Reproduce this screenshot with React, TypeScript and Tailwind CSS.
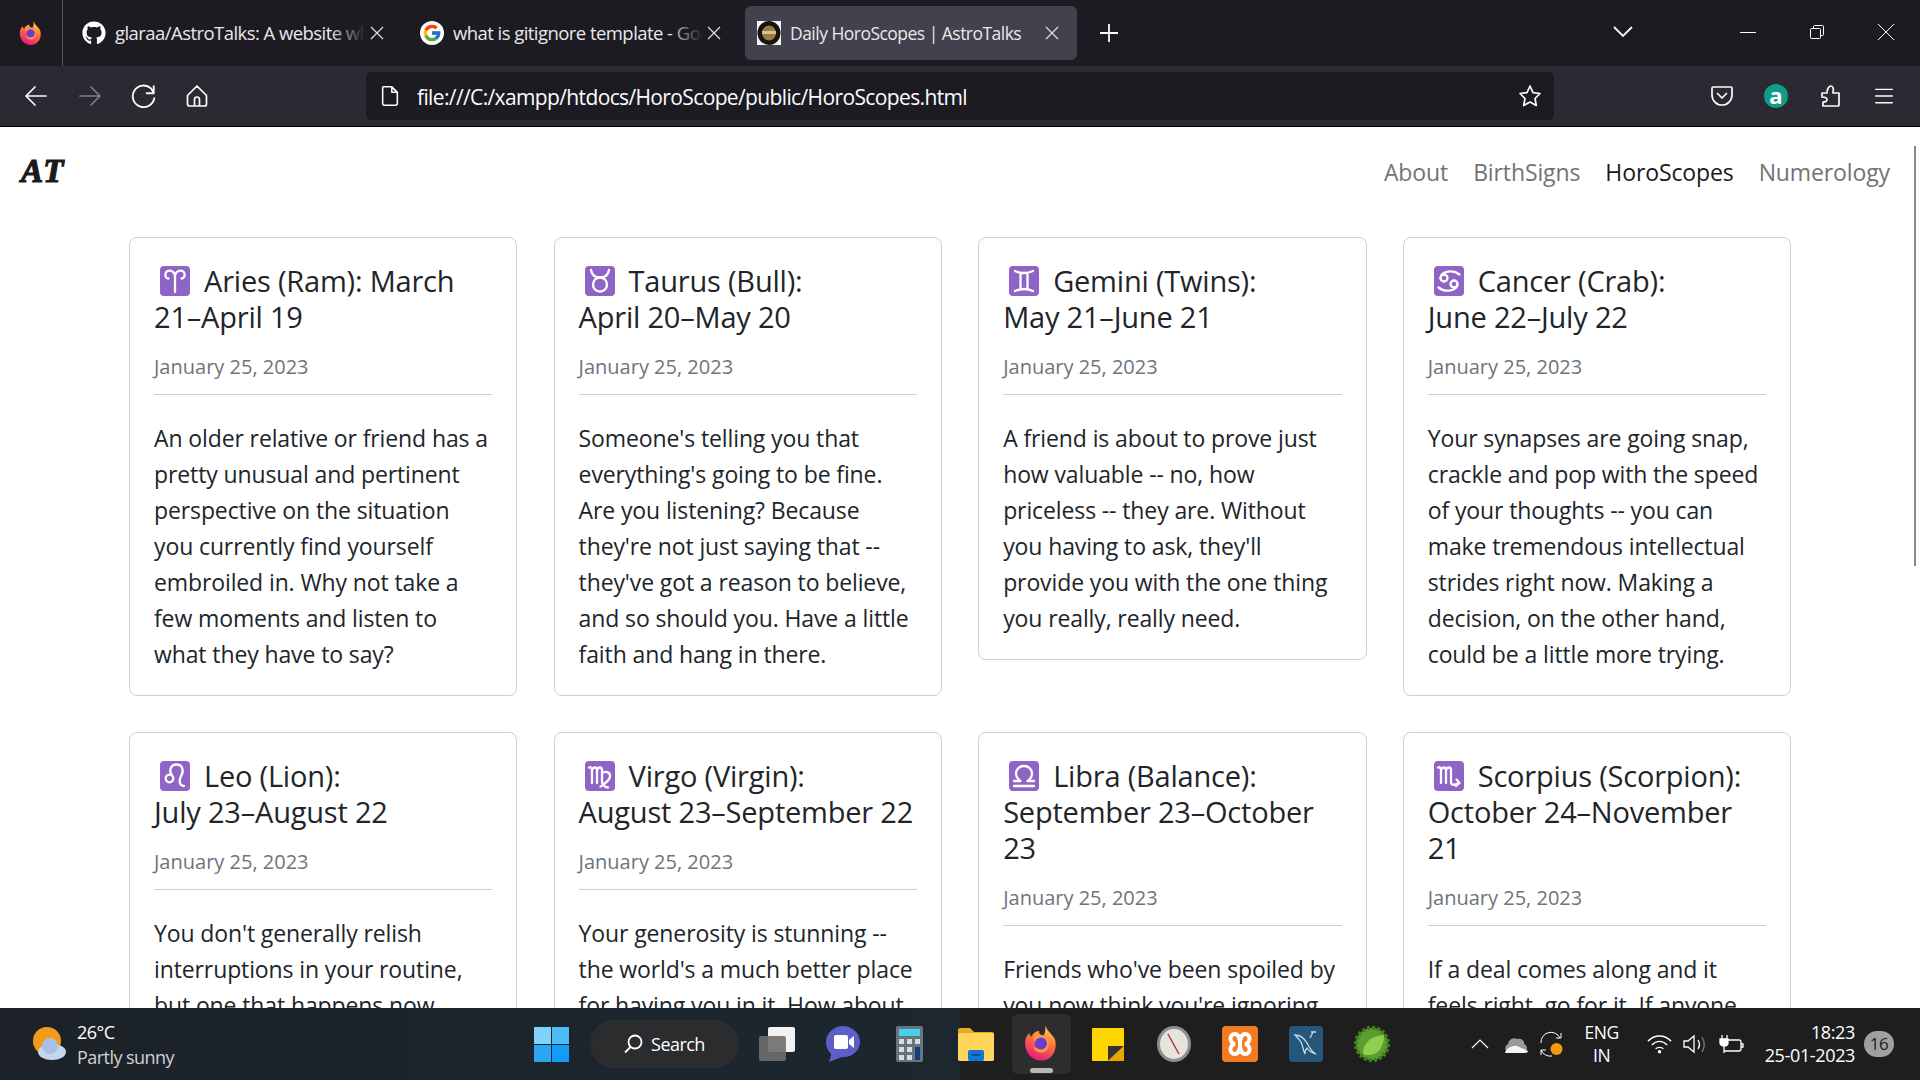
import { FaGithub } from "react-icons/fa";
import { FcGoogle } from "react-icons/fc";
import { ReactNode } from "react";

type Card = { sign: ReactNode; title: string[]; lines: string[] };

const signs: Record<string, ReactNode> = {
  aries: <path d="M15 26V11C15 4 7 2.500 5.500 7.500C4.800 10.500 6.500 12.500 8.500 12.500M15 11C15 4 23 2.500 24.500 7.500C25.200 10.500 23.500 12.500 21.500 12.500" />,
  taurus: (
    <>
      <circle cx="15" cy="18.500" r="7" />
      <path d="M6 4C7 9.500 11 11.500 15 11.500C19 11.500 23 9.500 24 4" />
    </>
  ),
  gemini: <path d="M6 5Q15 9 24 5M6 25Q15 21 24 25M11.500 7.500V22.500M18.500 7.500V22.500" />,
  cancer: (
    <>
      <circle cx="10" cy="12" r="3.500" />
      <circle cx="20" cy="18" r="3.500" />
      <path d="M6.500 12C7 5 19 3 25.500 8.500M23.500 18C23 25 11 27 4.500 21.500" />
    </>
  ),
  leo: (
    <>
      <circle cx="9.500" cy="17.500" r="3.800" />
      <path d="M12 14.500C8.500 9 11 3.500 16.500 3.500C22.500 3.500 24 9.500 21.500 14C19 18.500 18.500 25 24 25" />
    </>
  ),
  virgo: <path d="M4 6.500C6 5.500 7 7.500 7 9.500V22M7 9.500C8 5.500 12 5.500 12 9.500V22M12 9.500C13 5.500 17 5.500 17 9.500V20C17 23.500 19.500 26.500 23 26.500M17 12.500C20 9.500 25.500 11 25 15.500C24.500 20 19 23 15.500 25.500" />,
  libra: <path d="M5 25H25M5 20H11.500C8.500 18 7 15 7 12.500C7 8 10.500 5 15 5C19.500 5 23 8 23 12.500C23 15 21.500 18 18.500 20H25" />,
  scorpio: <path d="M4 6.500C6 5.500 7 7.500 7 9.500V22M7 9.500C8 5.500 12 5.500 12 9.500V22M12 9.500C13 5.500 17 5.500 17 9.500V21C17 24.500 20 24.500 25 22M22.500 18.500L25.500 22L22 25" />,
};

const row1: Card[] = [
  {
    sign: signs.aries,
    title: ["Aries (Ram): March", "21–April 19"],
    lines: [
      "An older relative or friend has a",
      "pretty unusual and pertinent",
      "perspective on the situation",
      "you currently find yourself",
      "embroiled in. Why not take a",
      "few moments and listen to",
      "what they have to say?",
    ],
  },
  {
    sign: signs.taurus,
    title: ["Taurus (Bull):", "April 20–May 20"],
    lines: [
      "Someone's telling you that",
      "everything's going to be fine.",
      "Are you listening? Because",
      "they're not just saying that --",
      "they've got a reason to believe,",
      "and so should you. Have a little",
      "faith and hang in there.",
    ],
  },
  {
    sign: signs.gemini,
    title: ["Gemini (Twins):", "May 21–June 21"],
    lines: [
      "A friend is about to prove just",
      "how valuable -- no, how",
      "priceless -- they are. Without",
      "you having to ask, they'll",
      "provide you with the one thing",
      "you really, really need.",
    ],
  },
  {
    sign: signs.cancer,
    title: ["Cancer (Crab):", "June 22–July 22"],
    lines: [
      "Your synapses are going snap,",
      "crackle and pop with the speed",
      "of your thoughts -- you can",
      "make tremendous intellectual",
      "strides right now. Making a",
      "decision, on the other hand,",
      "could be a little more trying.",
    ],
  },
];

const row2: Card[] = [
  {
    sign: signs.leo,
    title: ["Leo (Lion):", "July 23–August 22"],
    lines: ["You don't generally relish", "interruptions in your routine,", "but one that happens now"],
  },
  {
    sign: signs.virgo,
    title: ["Virgo (Virgin):", "August 23–September 22"],
    lines: ["Your generosity is stunning --", "the world's a much better place", "for having you in it. How about"],
  },
  {
    sign: signs.libra,
    title: ["Libra (Balance):", "September 23–October", "23"],
    lines: ["Friends who've been spoiled by", "you now think you're ignoring"],
  },
  {
    sign: signs.scorpio,
    title: ["Scorpius (Scorpion):", "October 24–November", "21"],
    lines: ["If a deal comes along and it", "feels right, go for it. If anyone"],
  },
];

function SignCard({ card }: { card: Card }) {
  return (
    <div className="rounded-lg border border-[#d0d0d0] bg-white px-[24px] pt-[25px] pb-[23px]">
      <h5 className="text-[29px] leading-[36px] tracking-[-0.007em] text-[#212529] whitespace-nowrap">
        {card.title.map((line, i) => (
          <div key={i} className="flex items-center">
            {i === 0 && (
              <svg viewBox="0 0 30 30" className="w-[30px] h-[30px] ml-[6px] mr-[14px] shrink-0" fill="none" stroke="white" strokeWidth="2.300" strokeLinecap="round" strokeLinejoin="round">
                <rect width="30" height="30" rx="4" fill="#9063c6" stroke="none" />
                {card.sign}
              </svg>
            )}
            {line}
          </div>
        ))}
      </h5>
      <p className="mt-[17px] text-[20px] leading-[30px] text-[#6c757d]">January 25, 2023</p>
      <hr className="mt-[12px] border-[#cfcfcf]" />
      <div className="mt-[25px] text-[23px] leading-[36px] tracking-[-0.005em] text-[#212529] whitespace-nowrap">
        {card.lines.map((line, i) => (
          <div key={i}>{line}</div>
        ))}
      </div>
    </div>
  );
}

function Tab({ icon, label, width, active }: { icon: ReactNode; label: string; width: string; active?: boolean }) {
  return (
    <div className={`flex items-center h-[54px] rounded-md pl-[12px] ${width} ${active ? "bg-[#42414d]" : ""}`}>
      <div className="w-[24px] h-[24px] shrink-0">{icon}</div>
      <div className={`relative ml-[9px] flex-1 overflow-hidden whitespace-nowrap tracking-[-0.03em] text-[#e8e8ea] ${active ? "text-[17.5px]" : "text-[18.5px]"}`}>
        {label}
        {!active && <div className="absolute right-0 top-0 h-full w-[36px] bg-gradient-to-r from-transparent to-[#1c1b22]" />}
      </div>
      <svg viewBox="0 0 16 16" className={`w-[16px] h-[16px] shrink-0 ${active ? "mx-[17px]" : "ml-[3px] mr-[23px]"}`} stroke="#e0e0e6" strokeWidth="1.2">
        <path d="M2 2L14 14M14 2L2 14" />
      </svg>
    </div>
  );
}

function FirefoxIcon({ className }: { className: string }) {
  return (
    <svg viewBox="0 0 32 32" className={className}>
      <defs>
        <linearGradient id="ffx" x1="0.7" y1="0" x2="0.3" y2="1">
          <stop offset="0" stopColor="#ffd24f" />
          <stop offset="0.45" stopColor="#ff7139" />
          <stop offset="1" stopColor="#e31587" />
        </linearGradient>
      </defs>
      <path d="M20 0C20 4 25 7 28 12C31 20 27 32 16 32C7 32 1 25 1 16C1 12 3 8 5 7C5 9 6 10 7 10C8 7 11 5 14 5C13 7 15 9 18 9C20 6 19 3 20 0Z" fill="url(#ffx)" />
      <path d="M8 12C10 8.500 15 8 19 10C24 13 24 21 19 24C15 26 10 24 9 20C13 22 16 21 17 18C15 17 12 17 11 15C10 14 9 13 8 12Z" fill="#ff9a3c" />
      <circle cx="15.500" cy="16.500" r="5.500" fill="#6b3bd1" />
    </svg>
  );
}

function ChromeIcon({ children, className }: { children: ReactNode; className?: string }) {
  return (
    <svg viewBox="0 0 24 24" className={className ?? "w-[24px] h-[24px]"} fill="none" stroke="#fbfbfe" strokeWidth="1.7" strokeLinecap="round" strokeLinejoin="round">
      {children}
    </svg>
  );
}

export default function App() {
  return (
    <div className="flex flex-col h-screen overflow-hidden bg-white font-['Open_Sans',sans-serif]">
      {/* tab strip */}
      <div className="flex items-center h-[66px] shrink-0 bg-[#1c1b22]">
        <div className="flex items-center justify-center w-[63px] h-full border-r border-[#55545c]">
          <FirefoxIcon className="w-[24px] h-[26px]" />
        </div>
        <div className="flex items-center ml-[7px]">
          <Tab
            width="w-[338px]"
            label="glaraa/AstroTalks: A website whe"
            icon={<FaGithub className="w-[24px] h-[24px] text-white" />}
          />
          <Tab
            width="w-[337px]"
            label="what is gitignore template - Goo"
            icon={
              <div className="flex items-center justify-center w-[24px] h-[24px] rounded-full bg-white">
                <FcGoogle className="w-[20px] h-[20px]" />
              </div>
            }
          />
          <Tab
            active
            width="w-[332px]"
            label="Daily HoroScopes | AstroTalks"
            icon={
              <svg viewBox="0 0 24 24" className="w-[24px] h-[24px]">
                <rect width="24" height="24" fill="#f4f4f4" />
                <ellipse cx="12" cy="12" rx="11.500" ry="12" fill="#15130e" />
                <ellipse cx="12" cy="12" rx="7" ry="7.500" fill="#9c7a3e" />
                <rect x="5" y="10" width="14" height="3" fill="#d7c18c" />
              </svg>
            }
          />
        </div>
        <svg viewBox="0 0 20 20" className="w-[20px] h-[20px] ml-[22px]" stroke="#fbfbfe" strokeWidth="1.8">
          <path d="M10 1V19M1 10H19" />
        </svg>
        <svg viewBox="0 0 20 12" className="w-[20px] h-[12px] ml-[494px] -mt-[2px]" fill="none" stroke="#fbfbfe" strokeWidth="1.8">
          <path d="M1 1L10 10L19 1" />
        </svg>
        <div className="w-[16px] h-px ml-[107px] -mt-[2px] bg-white" />
        <svg viewBox="0 0 14 14" className="w-[14px] h-[14px] ml-[54px] -mt-[2px]" fill="none" stroke="white" strokeWidth="1">
          <rect x="0.500" y="3.500" width="10" height="10" rx="1" />
          <path d="M3.500 3.500V1.500A1 1 0 0 1 4.500.5H12.500A1 1 0 0 1 13.500 1.500V9.500A1 1 0 0 1 12.500 10.500H10.500" />
        </svg>
        <svg viewBox="0 0 16 16" className="w-[16px] h-[16px] ml-[54px] -mt-[2px]" stroke="white" strokeWidth="1">
          <path d="M0 0L16 16M16 0L0 16" />
        </svg>
      </div>

      {/* toolbar */}
      <div className="flex items-center h-[61px] shrink-0 bg-[#2b2a33] border-b border-black">
        <ChromeIcon className="w-[24px] h-[24px] ml-[24px]">
          <path d="M22 12H2M11 3L2 12L11 21" />
        </ChromeIcon>
        <ChromeIcon className="w-[24px] h-[24px] ml-[30px] opacity-40">
          <path d="M2 12H22M13 3L22 12L13 21" />
        </ChromeIcon>
        <ChromeIcon className="w-[26px] h-[26px] ml-[29px]">
          <path d="M21 3V9.500H14.500M21.500 14A10 10 0 1 1 18.500 5L21 9" />
        </ChromeIcon>
        <ChromeIcon className="w-[24px] h-[24px] ml-[28px]">
          <path d="M12 2L2.500 11.500V20A2 2 0 0 0 4.500 22H19.500A2 2 0 0 0 21.500 20V11.500ZM9.500 22V15.500A2.500 2.500 0 0 1 14.500 15.500V22" />
        </ChromeIcon>
        <div className="flex items-center w-[1188px] h-[48px] ml-[157px] -mt-px rounded-md bg-[#1c1b22]">
          <ChromeIcon className="w-[22px] h-[24px] ml-[13px]">
            <path d="M5 2H14L20 8V20A2 2 0 0 1 18 22H6A2 2 0 0 1 4 20V3A1 1 0 0 1 5 2ZM14 2V8H20" />
          </ChromeIcon>
          <span className="ml-[16px] mt-[4px] text-[21px] tracking-[-0.03em] text-[#fbfbfe] whitespace-nowrap">
            file:///C:/xampp/htdocs/HoroScope/public/HoroScopes.html
          </span>
          <ChromeIcon className="w-[24px] h-[24px] ml-auto mr-[12px]">
            <path d="M12 2L15 8.600L22 9.500L17 14.500L18.300 21.500L12 18L5.700 21.500L7 14.500L2 9.500L9 8.600Z" />
          </ChromeIcon>
        </div>
        <ChromeIcon className="w-[24px] h-[24px] ml-[156px]">
          <path d="M3 3H21A1 1 0 0 1 22 4V11A10 10 0 0 1 2 11V4A1 1 0 0 1 3 3ZM7.500 9.500L12 14L16.500 9.500" />
        </ChromeIcon>
        <div className="flex items-center justify-center w-[24px] h-[24px] ml-[30px] rounded-full bg-[#0f9d8a] text-white text-[22px] font-bold leading-none pb-[3px]">a</div>
        <ChromeIcon className="w-[24px] h-[26px] ml-[30px]">
          <path d="M4 9H9C9 5 11 2 13 2C15 2 16 5 15 9H21V21A1 1 0 0 1 20 22H5V18C8 18 9 17 9 15.500C9 14 8 13 4 13Z" />
        </ChromeIcon>
        <ChromeIcon className="w-[20px] h-[20px] ml-[32px]">
          <path d="M2 4H22M2 12H22M2 20H22" />
        </ChromeIcon>
      </div>

      {/* page */}
      <div className="relative flex-1 min-h-0 overflow-hidden">
        <nav className="flex items-center justify-between h-[90px] pl-[21px] pr-[30px]">
          <span className="font-['Liberation_Serif',serif] font-bold italic text-[33px] tracking-[2px] text-[#1a1a1a] [-webkit-text-stroke:1.2px_#1a1a1a]">AT</span>
          <div className="flex gap-[25px] text-[23px] tracking-[-0.005em] text-[#737373]">
            <a>About</a>
            <a>BirthSigns</a>
            <a className="text-[#1a1a1a]">HoroScopes</a>
            <a>Numerology</a>
          </div>
        </nav>
        <div className="grid grid-cols-[repeat(4,388.4px)] items-start gap-x-[36.2px] gap-y-[36px] pl-[129px] pt-[20px]">
          {row1.map((card, i) => (
            <SignCard key={i} card={card} />
          ))}
          {row2.map((card, i) => (
            <SignCard key={i} card={card} />
          ))}
        </div>
        <div className="absolute right-[4px] top-[19px] w-[2px] h-[420px] bg-[#8a8a8a]" />
      </div>

      {/* windows taskbar */}
      <div className="relative flex items-center h-[72px] shrink-0 bg-gradient-to-r from-[#1c2228] via-[#1c2730] to-[#1e1e1f] to-50% text-white">
        <svg viewBox="0 0 34 34" className="w-[34px] h-[34px] ml-[32px]">
          <circle cx="15" cy="14" r="14" fill="#f49a1a" />
          <ellipse cx="20" cy="25" rx="14" ry="8" fill="#c5d5f0" />
          <circle cx="18" cy="19" r="8" fill="#a9bfe6" />
        </svg>
        <div className="ml-[11px] mt-[1px] text-[18px] leading-[25px] tracking-[-0.03em]">
          <div>26°C</div>
          <div className="text-[#cfd2d4]">Partly sunny</div>
        </div>
        <svg viewBox="0 0 35 35" className="w-[35px] h-[35px] ml-[360px]">
          <rect width="17" height="17" fill="#7fd3fb" />
          <rect x="18" width="17" height="17" fill="#4cbcf5" />
          <rect y="18" width="17" height="17" fill="#2ba6f2" />
          <rect x="18" y="18" width="17" height="17" fill="#119cf5" />
        </svg>
        <div className="flex items-center w-[149px] h-[48px] ml-[21px] pl-[33px] gap-[8px] rounded-full bg-[#2a2c2e]">
          <svg viewBox="0 0 20 20" className="w-[20px] h-[20px]" fill="none" stroke="white" strokeWidth="1.8">
            <circle cx="12" cy="8" r="6.500" />
            <path d="M7.500 13L2 18.500" />
          </svg>
          <span className="text-[18px] tracking-[-0.03em]">Search</span>
        </div>
        <svg viewBox="0 0 36 34" className="w-[36px] h-[34px] ml-[20px]">
          <rect x="9" width="27" height="25" rx="2" fill="#f2f2f2" />
          <rect y="9" width="27" height="25" rx="2" fill="#6e6e6e" opacity="0.9" />
        </svg>
        <svg viewBox="0 0 34 36" className="w-[34px] h-[36px] ml-[31px]">
          <path d="M17 0C26 0 34 7 34 16C34 26 24 32 16 31L3 36C4 33 5 30 5 28C2 25 0 21 0 16C0 7 8 0 17 0Z" fill="#5b5fc7" />
          <rect x="8" y="9" width="14" height="14" rx="2" fill="white" />
          <path d="M23 14L28 10V22L23 18Z" fill="white" />
        </svg>
        <svg viewBox="0 0 27 36" className="w-[27px] h-[36px] ml-[36px]">
          <rect width="27" height="36" rx="2" fill="#68737d" />
          <rect x="3" y="3" width="21" height="7" fill="#47d0ee" />
          <rect x="3" y="13" width="5" height="5" fill="#d8dde0" />
          <rect x="11" y="13" width="5" height="5" fill="#d8dde0" />
          <rect x="19" y="13" width="5" height="5" fill="#d8dde0" />
          <rect x="3" y="21" width="5" height="5" fill="#d8dde0" />
          <rect x="11" y="21" width="5" height="5" fill="#d8dde0" />
          <rect x="3" y="29" width="5" height="5" fill="#d8dde0" />
          <rect x="11" y="29" width="5" height="5" fill="#d8dde0" />
          <rect x="19" y="21" width="5" height="13" fill="#123e7a" />
        </svg>
        <svg viewBox="0 0 36 33" className="w-[36px] h-[33px] ml-[35px]">
          <path d="M0 2A2 2 0 0 1 2 0H12L16 4H34A2 2 0 0 1 36 6V31A2 2 0 0 1 34 33H2A2 2 0 0 1 0 31Z" fill="#e9a91b" />
          <rect y="5" width="36" height="28" rx="2" fill="#ffd65c" />
          <rect x="10" y="22" width="16" height="11" rx="2" fill="#0f78d4" />
          <rect x="13" y="26" width="10" height="2" fill="#0a4f8f" />
        </svg>
        <div className="relative flex items-center justify-center w-[59px] h-[60px] ml-[18px] rounded-md bg-[#2d2d2e]">
          <FirefoxIcon className="w-[35px] h-[36px] -mt-[2px]" />
          <div className="absolute bottom-[1px] left-[18px] w-[23px] h-[5px] rounded-full bg-[#b8b8b8]" />
        </div>
        <svg viewBox="0 0 32 33" className="w-[32px] h-[33px] ml-[21px]">
          <rect width="32" height="33" rx="1" fill="#ffd500" />
          <path d="M16 33V18H32Z" fill="#333" />
          <path d="M32 18L16 33H32Z" fill="#e6a800" />
        </svg>
        <svg viewBox="0 0 34 36" className="w-[34px] h-[36px] ml-[33px]">
          <ellipse cx="17" cy="18" rx="17" ry="18" fill="#8f8f8f" />
          <ellipse cx="17" cy="18" rx="14" ry="15" fill="#e7e3dd" />
          <path d="M11 8L22 28" stroke="#b03a2e" strokeWidth="1.5" />
        </svg>
        <div className="flex items-center justify-center w-[36px] h-[36px] ml-[31px] rounded bg-[#f37b22]">
          <svg viewBox="0 0 28 28" className="w-[28px] h-[28px]" fill="none" stroke="white" strokeWidth="4">
            <path d="M9 4C3 4 3 13 9 14C3 15 3 24 9 24C12 24 14 20 14 14C14 20 16 24 19 24C25 24 25 15 19 14C25 13 25 4 19 4C16 4 14 8 14 14C14 8 12 4 9 4Z" />
          </svg>
        </div>
        <div className="flex items-center justify-center w-[34px] h-[36px] ml-[31px] rounded bg-[#25567c]">
          <svg viewBox="0 0 28 30" className="w-[28px] h-[30px]" fill="none" stroke="#c9d7e2" strokeWidth="1.3">
            <path d="M3 6C8 6 12 9 15 14C17 18 20 23 24 25C20 24 17 22 15 19C13 21 13 23 13 25C11 21 11 17 9 13C7 10 5 8 3 6ZM21 3L18 9M19 3H24" />
          </svg>
        </div>
        <svg viewBox="0 0 37 36" className="w-[37px] h-[36px] ml-[31px]">
          <circle cx="18" cy="18" r="16" fill="#5a9e32" stroke="#3f8020" strokeWidth="4" strokeDasharray="3 2" />
          <path d="M9 28C9 17 17 10 30 9C30 22 23 30 13 29C11 29 10 28 9 28Z" fill="#8fd14f" />
        </svg>

        <div className="absolute right-[26px] inset-y-0 flex items-center">
          <svg viewBox="0 0 18 10" className="w-[18px] h-[10px] mr-[15px]" fill="none" stroke="white" strokeWidth="1.2">
            <path d="M1 9L9 1L17 9" />
          </svg>
          <svg viewBox="0 0 25 17" className="w-[25px] h-[17px] mr-[11px] -ml-[1px]">
            <path d="M5 17A5 5 0 0 1 5 8C6 3 11 1 14 3C18 2 22 5 21 8C25 9 25 16 21 17Z" fill="#9a9a9a" />
            <path d="M2 17C3 12 10 9 14 10L25 15C25 16 24 17 21 17Z" fill="#f4f4f4" />
          </svg>
          <svg viewBox="0 0 26 26" className="w-[26px] h-[26px]" fill="none" stroke="white" strokeWidth="1">
            <path d="M2 12A10 10 0 0 1 21 7M22 2V7H17M2 24V19H7M2 19A10 10 0 0 0 13 25" />
            <circle cx="17.500" cy="18" r="6" fill="#f59a0c" stroke="none" />
          </svg>
          <div className="w-[58px] ml-[8px] text-center text-[17.5px] leading-[23px] tracking-[-0.02em]">
            <div>ENG</div>
            <div>IN</div>
          </div>
          <svg viewBox="0 0 26 20" className="w-[25px] h-[20px] ml-[16px]" fill="none" stroke="white" strokeWidth="1.500">
            <path d="M1 7C8 0 18 0 25 7M5 11C10 6 16 6 21 11M9 15C11 13 15 13 17 15" />
            <circle cx="13" cy="18" r="1.800" fill="white" stroke="none" />
          </svg>
          <svg viewBox="0 0 25 20" className="w-[25px] h-[20px] ml-[11px]" fill="none" stroke="white" strokeWidth="1.300">
            <path d="M1 7V13H5L11 18V2L5 7Z" />
            <path d="M15 6C17 9 17 12 15 15" />
            <path d="M19 3C22 8 22 13 19 18" stroke="#777" />
          </svg>
          <svg viewBox="0 0 25 20" className="w-[25px] h-[20px] ml-[11px]" fill="none" stroke="white" strokeWidth="1.300">
            <path d="M3 1V5M8 1V5" />
            <path d="M1 5H9V9C9 11 7 12 5 12C3 12 1 11 1 9Z" fill="white" />
            <path d="M5 12V19M5 6H20A2 2 0 0 1 22 8V15A2 2 0 0 1 20 17H5" />
            <path d="M22 10H24V13H22" />
          </svg>
          <div className="ml-[21px] text-right text-[18px] leading-[23px] tracking-[-0.02em]">
            <div>18:23</div>
            <div>25-01-2023</div>
          </div>
          <div className="flex items-center justify-center w-[30px] h-[26px] ml-[9px] rounded-full bg-[#a0a0a0] text-[#222] text-[17px] tracking-[-0.03em]">16</div>
        </div>
      </div>
    </div>
  );
}
